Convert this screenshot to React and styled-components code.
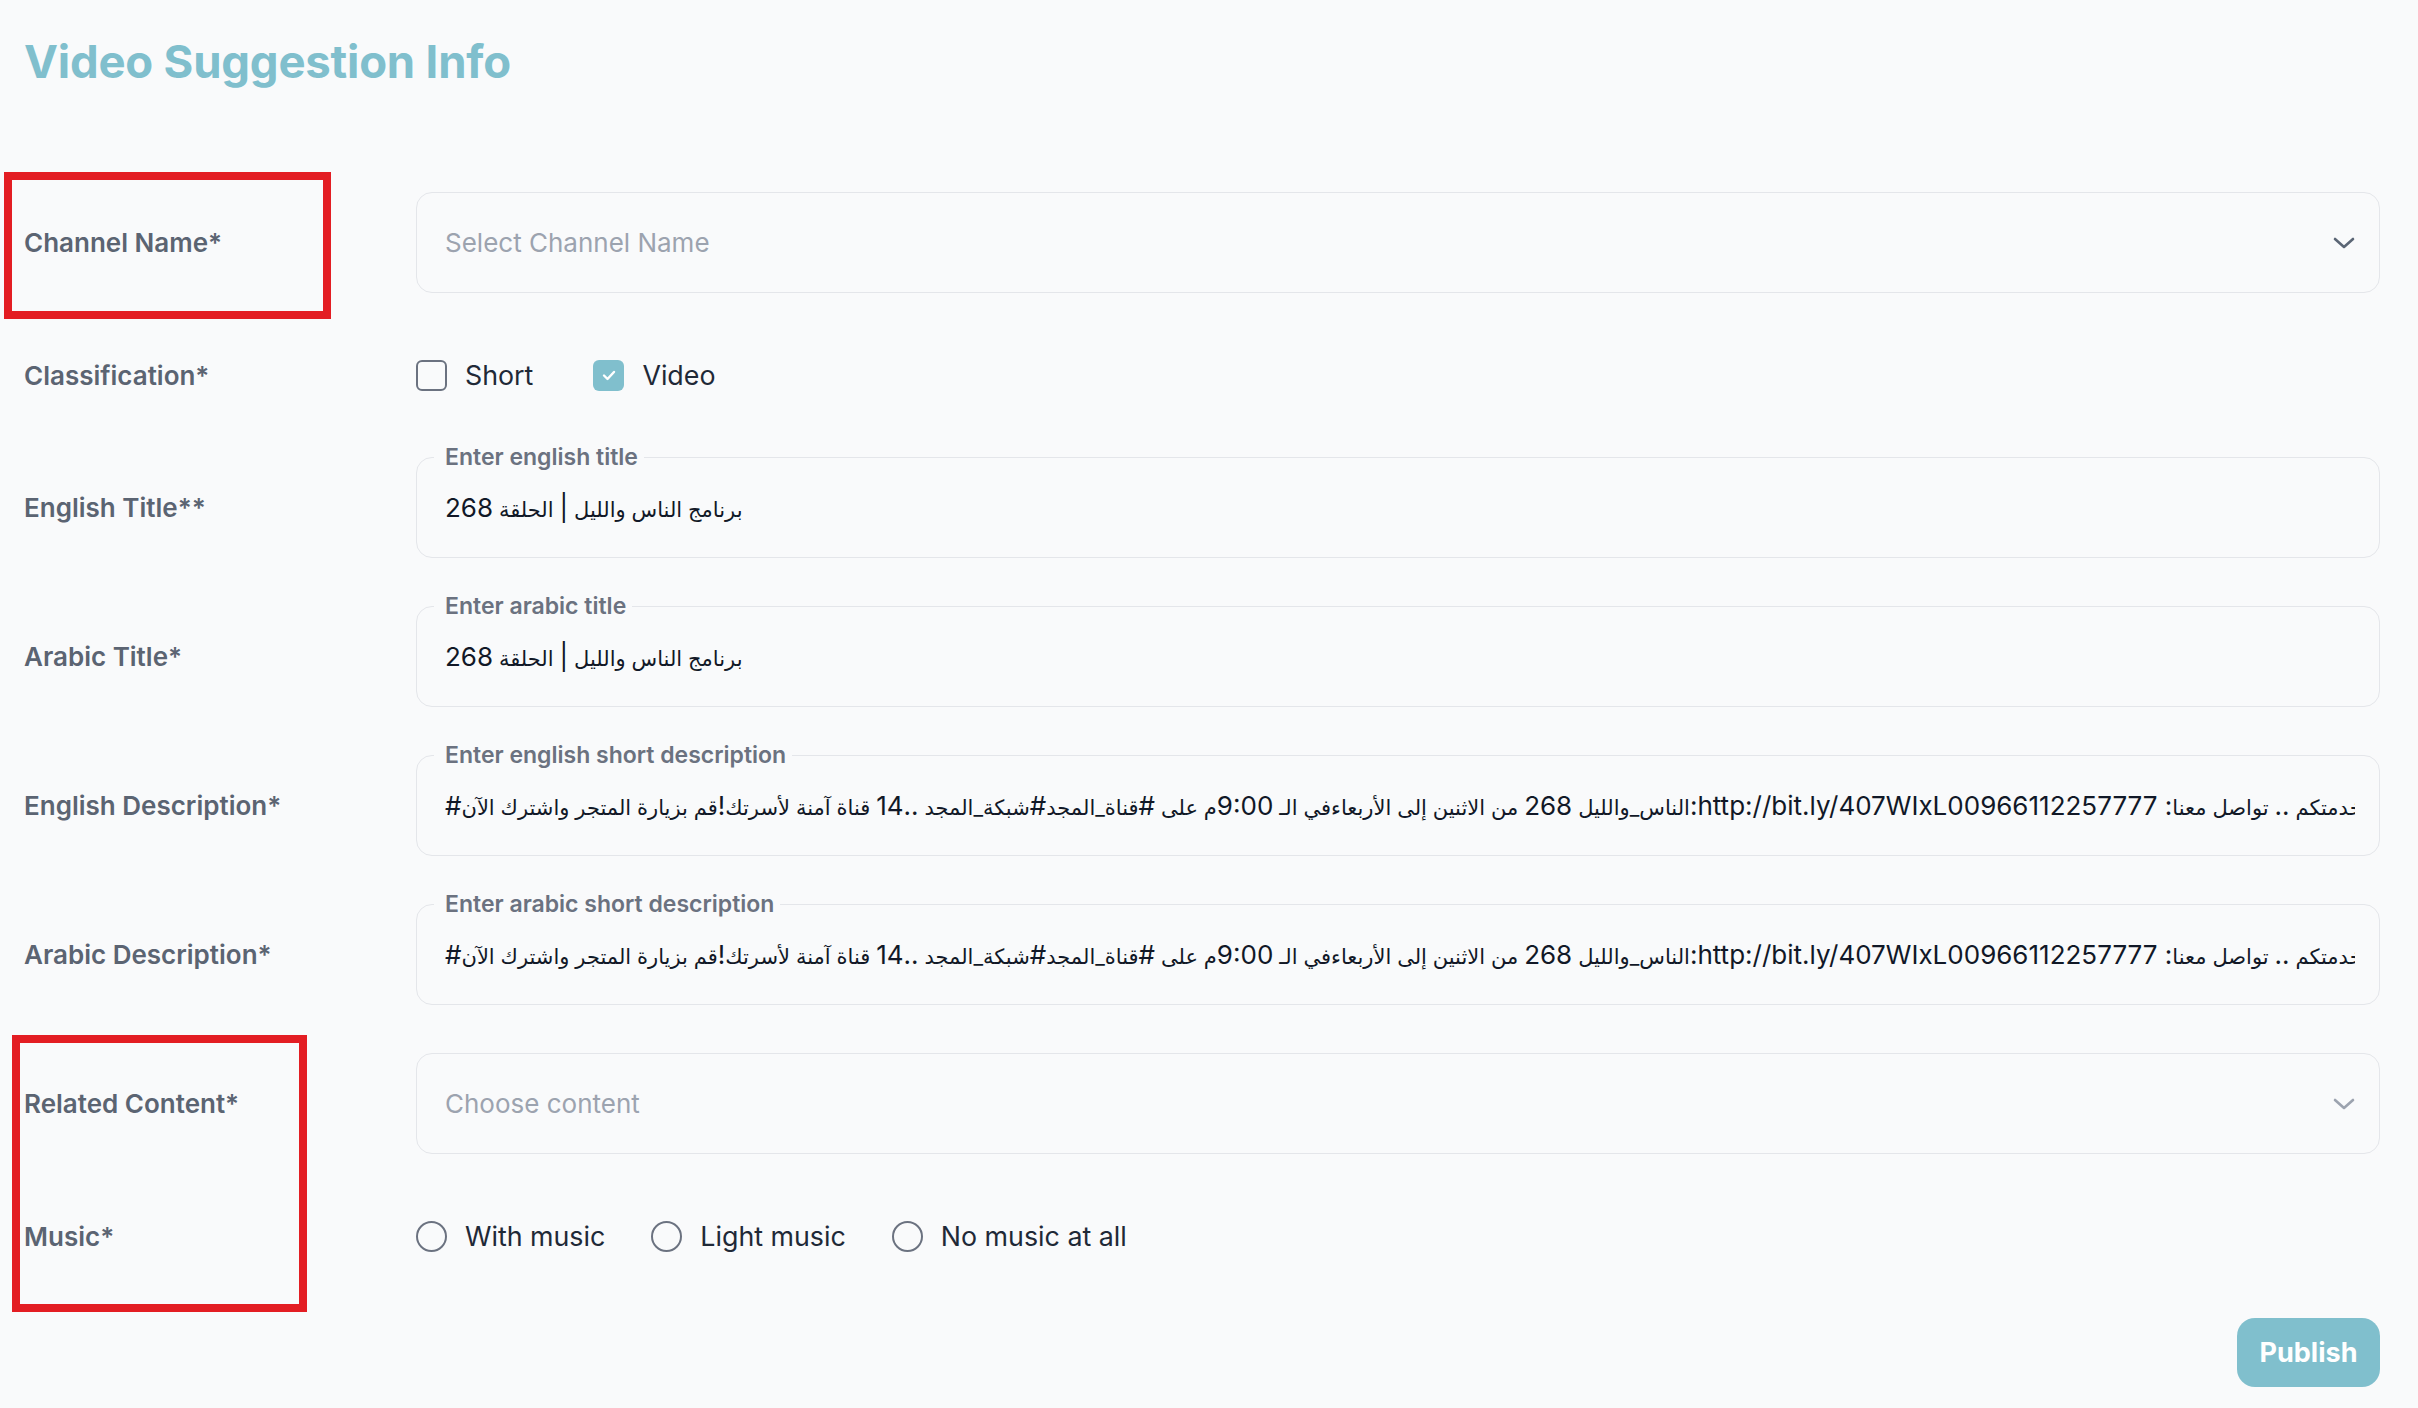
import React from 'react';
import styled, { createGlobalStyle } from 'styled-components';

const teal = '#80bfcd';

const GlobalStyle = createGlobalStyle`
  html, body {
    margin: 0;
    padding: 0;
    background: #f9fafb;
  }
  body {
    font-family: Inter, "DejaVu Sans", sans-serif;
  }
`;

const titleValue = 'برنامج الناس والليل | الحلقة 268';
const descStart =
  ':الناس_والليل 268 من الاثنين إلى الأربعاءفي الـ 9:00م على #قناة_المجد#شبكة_المجد ..14 قناة آمنة لأسرتك!قم بزيارة المتجر واشترك الآن#';
const descLink = 'http://bit.ly/407WIxL00966112257777';
const descEnd = 'نحن في خدمتكم .. تواصل معنا:';

const Page = styled.div`
  position: relative;
  box-sizing: border-box;
  min-height: 100vh;
  padding: 34px 38px 20px 24px;
`;

const Title = styled.h1`
  margin: 0 0 102px;
  font-size: 45.5px;
  line-height: 56px;
  font-weight: 700;
  color: ${teal};
  letter-spacing: -0.2px;
`;

const Form = styled.div`
  display: flex;
  flex-direction: column;
  gap: 48px;
`;

const Row = styled.div`
  display: grid;
  grid-template-columns: 392px 1fr;
  align-items: center;
  padding: ${(p) => (p.$options ? '18px 0' : '0')};
`;

const Label = styled.div`
  font-size: 26px;
  font-weight: 600;
  color: #5b6472;
`;

const Field = styled.div`
  position: relative;
  box-sizing: border-box;
  height: 101px;
  display: flex;
  align-items: center;
  gap: 20px;
  padding: 0 24px 0 28px;
  border: 1px solid #e4e6ea;
  border-radius: 16px;
  min-width: 0;
`;

const Legend = styled.span`
  position: absolute;
  top: -12px;
  left: 17px;
  padding: 0 6px 0 11px;
  background: #f9fafb;
  font-size: 23px;
  line-height: 22px;
  font-weight: 600;
  color: #6b7280;
`;

const Value = styled.div`
  flex: 1;
  min-width: 0;
  overflow: hidden;
  white-space: nowrap;
  font-size: 26px;
  color: #111827;
  direction: ltr;
`;

const Placeholder = styled.div`
  flex: 1;
  font-size: 26px;
  color: #9ca3af;
`;

const Isolate = styled.span`
  unicode-bidi: isolate;
`;

// the arabic fallback face runs wide, so its letters get a smaller size
const Ar = styled.span`
  font-size: 21px;
`;

const arabic = (text) =>
  text.split(/([\u0600-\u06FF_ ]*[\u0600-\u06FF][\u0600-\u06FF_ ]*)/).map((part, i) =>
    /[\u0600-\u06FF]/.test(part) ? <Ar key={i}>{part}</Ar> : part
  );

const Chevron = ({ color }) => (
  <svg width="22" height="12" viewBox="0 0 22 12" fill="none">
    <path d="M2 2 L11 10 L20 2" stroke={color} strokeWidth="2.6" strokeLinecap="round" strokeLinejoin="round" />
  </svg>
);

const Options = styled.div`
  display: flex;
  align-items: center;
  gap: ${(p) => p.$gap}px;
`;

const Option = styled.label`
  display: flex;
  align-items: center;
  gap: 18px;
  font-size: 26.8px;
  color: #1f2937;
`;

const Box = styled.span`
  box-sizing: border-box;
  width: 31px;
  height: 31px;
  display: flex;
  align-items: center;
  justify-content: center;
  border-radius: ${(p) => (p.$round ? '50%' : '6px')};
  border: ${(p) => (p.$checked ? 'none' : '2px solid #6b7280')};
  background: ${(p) => (p.$checked ? teal : 'transparent')};
`;

const Footer = styled.div`
  display: flex;
  justify-content: flex-end;
`;

const PublishButton = styled.button`
  width: 143px;
  height: 69px;
  border: none;
  border-radius: 18px;
  background: ${teal};
  color: #fff;
  font-family: Inter, sans-serif;
  font-size: 27px;
  font-weight: 700;
`;

// red annotation frames drawn over the labels
const Marker = styled.div`
  position: absolute;
  box-sizing: border-box;
  left: ${(p) => p.$left}px;
  top: ${(p) => p.$top}px;
  width: ${(p) => p.$w}px;
  height: ${(p) => p.$h}px;
  border: 8px solid #e31d23;
  pointer-events: none;
`;

const SelectField = ({ placeholder, chevron }) => (
  <Field>
    <Placeholder>{placeholder}</Placeholder>
    <Chevron color={chevron} />
  </Field>
);

const TextField = ({ legend, children }) => (
  <Field>
    <Legend>{legend}</Legend>
    <Value>{children}</Value>
  </Field>
);

const Description = () => (
  <>
    <Isolate dir="rtl">{arabic(descStart)}</Isolate>
    <Isolate dir="ltr">{descLink}</Isolate>{' '}
    <Isolate dir="rtl">{arabic(descEnd)}</Isolate>
  </>
);

const Check = () => (
  <svg width="14" height="11" viewBox="0 0 14 11" fill="none">
    <path d="M2 5.5 L5.5 9 L12 2" stroke="#fff" strokeWidth="2.4" strokeLinecap="round" strokeLinejoin="round" />
  </svg>
);

export default function App() {
  return (
    <Page>
      <GlobalStyle />
      <Title>Video Suggestion Info</Title>
      <Form>
        <Row>
          <Label>Channel Name*</Label>
          <SelectField placeholder="Select Channel Name" chevron="#5b6675" />
        </Row>
        <Row $options>
          <Label>Classification*</Label>
          <Options $gap={60}>
            <Option>
              <Box />
              Short
            </Option>
            <Option>
              <Box $checked>
                <Check />
              </Box>
              Video
            </Option>
          </Options>
        </Row>
        <Row>
          <Label>English Title**</Label>
          <TextField legend="Enter english title">
            <Isolate dir="rtl">{arabic(titleValue)}</Isolate>
          </TextField>
        </Row>
        <Row>
          <Label>Arabic Title*</Label>
          <TextField legend="Enter arabic title">
            <Isolate dir="rtl">{arabic(titleValue)}</Isolate>
          </TextField>
        </Row>
        <Row>
          <Label>English Description*</Label>
          <TextField legend="Enter english short description">
            <Description />
          </TextField>
        </Row>
        <Row>
          <Label>Arabic Description*</Label>
          <TextField legend="Enter arabic short description">
            <Description />
          </TextField>
        </Row>
        <Row>
          <Label>Related Content*</Label>
          <SelectField placeholder="Choose content" chevron="#9ca3af" />
        </Row>
        <Row $options>
          <Label>Music*</Label>
          <Options $gap={46}>
            <Option>
              <Box $round />
              With music
            </Option>
            <Option>
              <Box $round />
              Light music
            </Option>
            <Option>
              <Box $round />
              No music at all
            </Option>
          </Options>
        </Row>
        <Footer>
          <PublishButton>Publish</PublishButton>
        </Footer>
      </Form>
      <Marker $left={4} $top={172} $w={327} $h={147} />
      <Marker $left={12} $top={1035} $w={295} $h={277} />
    </Page>
  );
}
